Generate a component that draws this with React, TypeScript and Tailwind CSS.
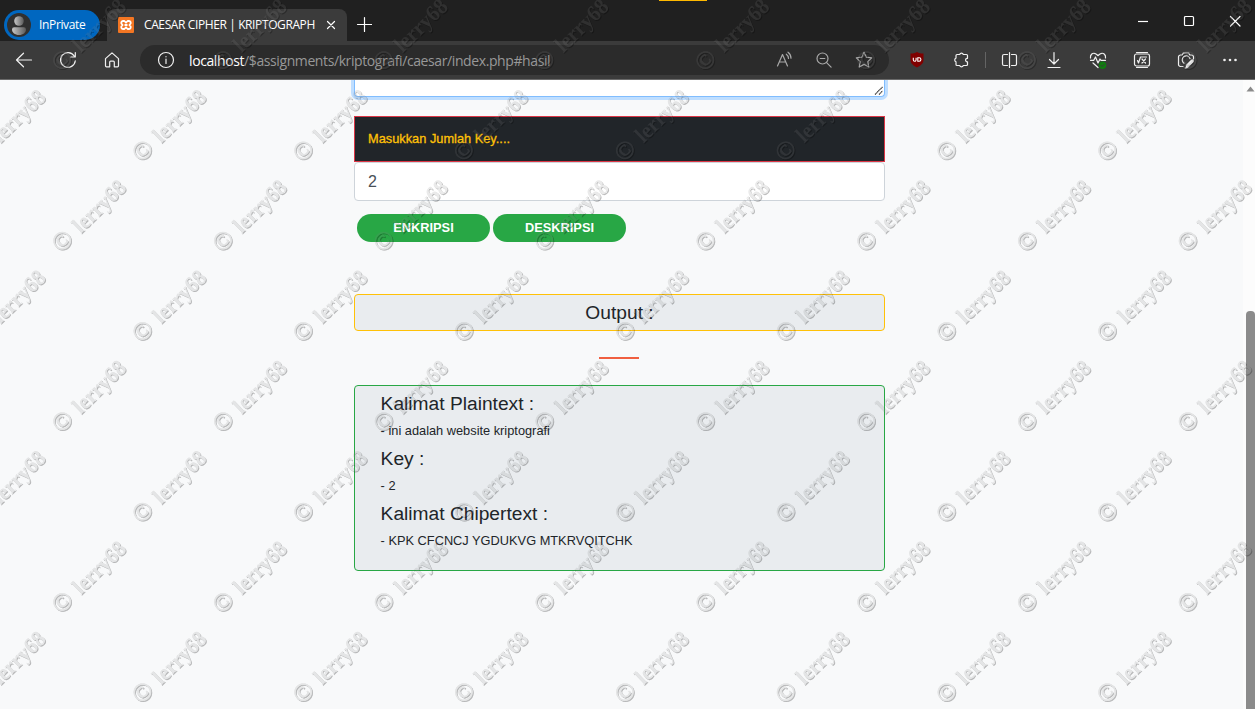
import type { ReactNode } from "react";

const COL = 160.8;
const ROW = 90.3;

function Watermark() {
  const marks: { x: number; y: number }[] = [];
  for (let r = 0; r < 8; r++) {
    const start = r % 2 === 0 ? 63 : -17.5;
    for (let c = 0; c < 9; c++) marks.push({ x: start + c * COL, y: 60.4 + r * ROW });
  }
  return (
    <svg
      className="pointer-events-none absolute inset-0 z-50 font-['Liberation_Serif',serif]"
      width="1255"
      height="709"
      aria-hidden="true"
    >
      <filter id="emboss" filterUnits="userSpaceOnUse" x="0" y="0" width="1255" height="709" colorInterpolationFilters="sRGB">
        <feOffset in="SourceAlpha" dx="1.300" dy="1.300" result="moved" />
        <feGaussianBlur in="moved" stdDeviation="0.500" result="soft" />
        <feComposite in="soft" in2="SourceAlpha" operator="out" result="edge" />
        <feComponentTransfer in="edge" result="shade">
          <feFuncA type="linear" slope="0.260" />
        </feComponentTransfer>
        <feComponentTransfer in="SourceGraphic" result="face">
          <feFuncA type="linear" slope="0.170" />
        </feComponentTransfer>
        <feMerge>
          <feMergeNode in="shade" />
          <feMergeNode in="face" />
        </feMerge>
      </filter>
      <g filter="url(#emboss)" fill="#808080" stroke="#808080">
        {marks.map((m, i) => (
          <g key={i} transform={`translate(${m.x} ${m.y}) rotate(-44)`}>
            <text x="-10.200" y="7.200" fontSize="25" strokeWidth="0.700" textLength="19.500" lengthAdjust="spacingAndGlyphs">©</text>
            <text x="17.800" y="7.200" fontSize="22.500" fontWeight="700" strokeWidth="0" textLength="65" lengthAdjust="spacingAndGlyphs">lerry68</text>
          </g>
        ))}
      </g>
    </svg>
  );
}

function Icon({ size = 18, className = "", children }: { size?: number; className?: string; children: ReactNode }) {
  return (
    <svg
      width={size}
      height={size}
      viewBox={`0 0 ${size} ${size}`}
      fill="none"
      stroke="currentColor"
      strokeWidth="1.2"
      strokeLinecap="round"
      strokeLinejoin="round"
      className={`shrink-0 ${className}`}
    >
      {children}
    </svg>
  );
}

function TabStrip() {
  return (
    <div className="relative flex h-[41px] bg-[#202020] text-white">
      <div className="absolute left-[659px] top-0 h-px w-12 bg-[#ffb900]" />
      <div className="ml-1 mt-[10px] flex h-[30px] w-24 items-center rounded-full bg-[#0067c0] pl-[3px]">
        <svg width="24" height="24" viewBox="0 0 24 24" className="shrink-0">
          <defs>
            <linearGradient id="avatar" x1="0" x2="1">
              <stop offset="0" stopColor="#c8c8c8" />
              <stop offset="1" stopColor="#5a5a5a" />
            </linearGradient>
          </defs>
          <circle cx="12" cy="12" r="12" fill="#303030" />
          <circle cx="12" cy="8" r="4.8" fill="url(#avatar)" />
          <path d="M5 16.5a2.2 2.2 0 0 1 2.2-2.2h9.6a2.2 2.2 0 0 1 2.2 2.2c0 3-3 5.5-7 5.5s-7-2.500-7-5.500z" fill="url(#avatar)" />
        </svg>
        <span className="ml-2 text-xs tracking-[-0.35px]">InPrivate</span>
      </div>
      <div className="ml-[7px] mt-[9px] flex h-8 w-[240px] items-center rounded-t-lg bg-[#3b3b3b] pl-[11px]">
        <svg width="16" height="16" viewBox="0 0 16 16" className="shrink-0">
          <rect width="16" height="16" rx="1" fill="#f37623" />
          <path
            d="M5 4h1.400L8 5.700 9.600 4H11a1.800 1.800 0 0 1 1.300 3L11.400 8l.9 1A1.800 1.800 0 0 1 11 12H9.600L8 10.300 6.400 12H5a1.800 1.800 0 0 1-1.300-3l.9-1-.9-1A1.800 1.800 0 0 1 5 4zM6.500 8h3"
            fill="none"
            stroke="#fff"
            strokeWidth="1.800"
            strokeLinejoin="round"
          />
        </svg>
        <span className="ml-[10px] w-[172px] whitespace-nowrap text-xs tracking-[-0.39px]">CAESAR CIPHER | KRIPTOGRAPH</span>
        <Icon size={10} className="ml-[10px]"><path d="M1.500 1.500l7 7M8.500 1.500l-7 7" /></Icon>
      </div>
      <Icon size={16} className="ml-[9px] mt-[16px]"><path d="M8.500 1.500v14M1.500 8.500h14" /></Icon>
      <div className="ml-auto mr-[14px] flex items-start gap-[34px] pt-[15px]">
        <Icon size={12}><path d="M1 6.500h10" strokeLinecap="butt" /></Icon>
        <Icon size={12}><rect x="1.500" y="1.500" width="9" height="9" rx="1" /></Icon>
        <Icon size={12}><path d="M1.500 1.500l9.500 9.500M11 1.500l-9.500 9.500" /></Icon>
      </div>
    </div>
  );
}

function Toolbar() {
  return (
    <div className="flex h-[39px] items-center border-b border-[#6a6a6a] bg-[#3b3b3b] text-[#f0f0f0]">
      <Icon className="ml-[15px]"><path d="M1.500 9h15M8.500 2.200L1.500 9l7 6.800" /></Icon>
      <Icon className="ml-[26px]"><path d="M16.300 9.800A7.400 7.400 0 1 1 15.200 5M16.300 1.500V6h-4.600" /></Icon>
      <Icon className="ml-[26px]"><path d="M2.500 7.600L9 1.900l6.500 5.700v7.200a1 1 0 0 1-1 1h-3.200v-4.700a1 1 0 0 0-1-1H7.700a1 1 0 0 0-1 1v4.700H3.500a1 1 0 0 1-1-1z" /></Icon>
      <div className="ml-[19px] flex h-[30px] w-[749px] items-center rounded-full bg-[#2b2b2b] pl-[17px] pr-4">
        <Icon><circle cx="9" cy="9" r="7.500" /><path d="M9 8v4.500M9 5.500v.3" /></Icon>
        <span className="ml-[14px] whitespace-nowrap text-[14px] tracking-[-0.4px] text-[#989898]">
          <span className="text-white">localhost</span>/$assignments/kriptografi/caesar/index.php#hasil
        </span>
        <div className="ml-auto flex items-center gap-[22px] text-[#a8a8a8]">
          <Icon><path d="M2.500 15L7.500 3.500 12.500 15M4.300 11h6.400M11.300 3.200a5 5 0 0 1 2.200 4.300M13 1.200a7.500 7.500 0 0 1 3 6" /></Icon>
          <Icon><circle cx="7.500" cy="7.500" r="5.500" /><path d="M11.600 11.600l4.500 4.500M5.200 7.500h4.600" /></Icon>
          <Icon><path d="M9 1.300l2.300 4.900 5.400.7-3.900 3.700 1 5.400L9 13.400 4.200 16l1-5.400L1.300 6.900l5.400-.7z" /></Icon>
        </div>
      </div>
      <svg width="16" height="18" viewBox="0 0 16 18" className="ml-[20px] shrink-0">
        <path d="M8 1c2 1.200 3.800 1.600 6.500 1.600V9c0 3.500-2.800 5.600-6.500 7.500C4.300 14.600 1.500 12.500 1.500 9V2.600C4.200 2.600 6 2.200 8 1z" fill="#800000" />
        <path d="M4.300 6.800v2a1.400 1.400 0 0 0 2.800 0v-2M8.800 6.800h1.400a1.700 1.700 0 0 1 0 3.400H8.800z" fill="none" stroke="#fff" strokeWidth="1.100" />
      </svg>
      <Icon className="ml-[27px]"><path d="M5 3.500h2.700a1.900 1.900 0 0 1 3.600 0H14.500a1 1 0 0 1 1 1v2.800h-.6a1.800 1.800 0 0 0 0 3.500h.6v2.700a1 1 0 0 1-1 1h-3.200a1.900 1.900 0 0 1-3.600 0H5a1 1 0 0 1-1-1v-2.800a1.900 1.900 0 0 1 0-3.600V4.500a1 1 0 0 1 1-1z" /></Icon>
      <div className="ml-[15px] h-4 w-px bg-[#646464]" />
      <Icon className="ml-[15px]"><path d="M6.500 3.500H3A1.500 1.500 0 0 0 1.500 5v8A1.500 1.500 0 0 0 3 14.500h3.500M10.500 3.500H14A1.500 1.500 0 0 1 15.500 5v8a1.500 1.500 0 0 1-1.500 1.500h-3.500M8.500 1.500v15" /></Icon>
      <Icon className="ml-[26px]"><path d="M9 1.500v11M4.500 8.500L9 13l4.500-4.500M3 16.500h12" /></Icon>
      <Icon className="ml-[26px]">
        <path d="M1.500 7C1 3.500 3.500 2 5.500 2.300 7.300 2.500 8.300 4 9 4.700 9.700 4 10.700 2.500 12.500 2.300c2-.3 4.500 1.200 4 4.700M1.500 9.300h3.300L6.500 6l2.500 6 2-4 1 1.300h4.500M4 12l5 4.500" />
        <circle cx="13.600" cy="14.200" r="3.700" fill="#107c10" stroke="none" />
        <path d="M12 14.300l1.200 1.200 2.200-2.300" stroke="#3b3b3b" strokeWidth="1" />
      </Icon>
      <Icon className="ml-[26px]">
        <rect x="1.500" y="3" width="15" height="12" rx="2" />
        <path d="M3.500 1.500h11M3.500 16.500h11M4.500 9.500l1 2.500 2-6h6M9 8l3.500 4M12.500 8L9 12" />
      </Icon>
      <Icon className="ml-[26px]">
        <path d="M6 15.500H3.500a2 2 0 0 1-2-2V6a2 2 0 0 1 2-2h1.800l1-2h5.400l1 2h1.800a2 2 0 0 1 2 2v2M7 12.200a4 4 0 1 1 6-4.500" />
        <path d="M10.300 15l5-5" strokeWidth="3.200" />
        <path d="M8.300 17l1.500-.4" />
      </Icon>
      <Icon className="ml-[26px]"><g fill="currentColor" stroke="none"><circle cx="3.500" cy="9" r="1.300" /><circle cx="9" cy="9" r="1.300" /><circle cx="14.500" cy="9" r="1.300" /></g></Icon>
    </div>
  );
}

function Result({ label, value }: { label: string; value: string }) {
  return (
    <div className="h-[55px]">
      <h4 className="h-[31px] pt-[4px] text-[19.2px] leading-[23px]">{label}</h4>
      <p className="text-[12.8px] leading-[24px]">- {value}</p>
    </div>
  );
}

export default function App() {
  return (
    <div className="relative flex h-[709px] w-[1255px] flex-col overflow-hidden bg-[#f8f9fa] font-['Open_Sans',sans-serif]">
      <TabStrip />
      <Toolbar />
      <div className="flex min-h-0 flex-1">
        <main className="flex-1 overflow-hidden pl-[354px] font-['Liberation_Sans',sans-serif] text-[#212529]">
          <div className="w-[531px]">
            <div className="flex h-[17px] items-end justify-end rounded-b border border-t-0 border-[#80bdff] bg-white p-px shadow-[0_0_0_3px_#bfdeff]">
              <svg width="9" height="9" viewBox="0 0 9 9" stroke="#222" strokeWidth="1.1" strokeDasharray="1.200 0.400">
                <path d="M1 8.500L8.500 1M5 8.500L8.500 5" />
              </svg>
            </div>
            <div className="mt-[19px] flex h-[46px] items-center border border-[#dc3545] bg-[#212529] px-[13px] text-[12.8px] text-[#ffc107] [-webkit-text-stroke:0.3px_#ffc107]">
              Masukkan Jumlah Key....
            </div>
            <div className="flex h-[39px] items-center rounded border border-[#ced4da] bg-white px-[13px] text-base text-[#495057]">2</div>
            <div className="mt-[13px] flex gap-[3px] pl-[3px] text-[12.8px] font-bold text-white">
              <button className="h-7 w-[133px] rounded-full bg-[#28a745]">ENKRIPSI</button>
              <button className="h-7 w-[133px] rounded-full bg-[#28a745]">DESKRIPSI</button>
            </div>
            <div className="mt-[52px] flex h-[37px] items-center justify-center rounded border border-[#ffc107] bg-[#e9ecef] pt-px text-[19.2px]">
              Output :
            </div>
            <div className="ml-[245px] mt-[26px] h-[2px] w-10 bg-[#f05f40]" />
            <div className="mt-[26px] h-[186px] rounded border border-[#28a745] bg-[#e9ecef] pl-[25.6px] pt-[2px]">
              <Result label="Kalimat Plaintext :" value="ini adalah website kriptografi" />
              <Result label="Key :" value="2" />
              <Result label="Kalimat Chipertext :" value="KPK CFCNCJ YGDUKVG MTKRVQITCHK" />
            </div>
          </div>
        </main>
        <div className="flex w-3 flex-col items-end bg-[#fcfcfc]">
          <svg width="9" height="6" viewBox="0 0 9 6" className="mt-[6px]"><path d="M4.500 0.500L8.500 5.500H0.500z" fill="#8b8b8b" /></svg>
          <div className="mt-[219px] w-[9px] flex-1 rounded-t-[4px] bg-[#8b8b8b]" />
        </div>
      </div>
      <Watermark />
    </div>
  );
}
